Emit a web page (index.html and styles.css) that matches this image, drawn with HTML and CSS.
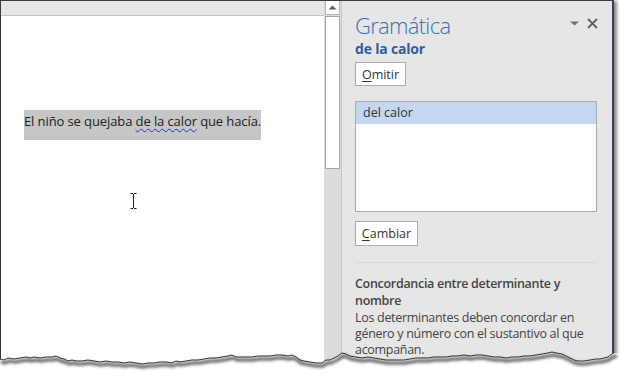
FILE: index.html
```html
<!DOCTYPE html>
<html lang="es">
<head>
<meta charset="utf-8">
<title>Gramática</title>
<link rel="stylesheet" href="styles.css">
</head>
<body>
<div class="window">
  <div class="doc">
    <div class="topbar"></div>
    <div class="doc-body">
      <p class="sentence"><span class="sel">El niño se quejaba <span class="err">de la calor</span> que hacía.</span></p>
      <svg class="ibeam" width="7" height="16" viewBox="0 0 7 16"><path d="M0.5 0.5h2.5M4 0.5h2.5M3.5 1v14M0.5 15.5h2.5M4 15.5h2.5" stroke="#222" stroke-width="1" fill="none"/></svg>
    </div>
  </div>
  <div class="scroll">
    <div class="scroll-btn"><svg width="9" height="5" viewBox="0 0 9 5"><path d="M0.5 4.5L4.5 0.5L8.5 4.5Z" fill="#606060"/></svg></div>
    <div class="scroll-thumb"></div>
  </div>
  <div class="pane">
    <div class="pane-head">
      <h1 class="title">Gramática</h1>
      <svg class="pane-icons" width="28" height="11" viewBox="0 0 28 11">
        <path d="M0 3.5h9L4.5 7.5Z" fill="#707070"/>
        <path d="M18 1L27 10M27 1L18 10" stroke="#666" stroke-width="2" fill="none"/>
      </svg>
    </div>
    <div class="subtitle">de la calor</div>
    <button class="btn btn-omitir"><u>O</u>mitir</button>
    <div class="listbox">
      <div class="list-item selected">del calor</div>
    </div>
    <button class="btn btn-cambiar"><u>C</u>ambiar</button>
    <div class="sep"></div>
    <div class="rule-title">Concordancia entre determinante y<br>nombre</div>
    <div class="rule-desc">Los determinantes deben concordar en<br>género y número con el sustantivo al que<br>acompañan.</div>
  </div>
</div>
<svg class="torn" width="624" height="40" viewBox="0 335 624 40">
  <defs>
    <filter id="blur" x="-5%" y="-50%" width="110%" height="200%"><feGaussianBlur stdDeviation="1.4"/></filter>
  </defs>
  <path fill="#fff" d="M0,359 L4,360 8,358 14,359 20,358 26,357 30,358 34,357 40,358 46,357 52,357 56,356 60,358 64,359 68,361 72,360 76,361 82,361 88,360 94,361 100,362 106,361 112,362 118,362 124,363 130,362 136,363 142,364 148,363 154,363 160,362 166,362 172,363 176,361 180,362 186,361 192,360 198,360 204,359 210,358 216,358 222,357 228,356 232,355 236,357 240,357 246,357 252,357 258,356 264,356 270,356 276,355 282,355 288,356 292,355 296,357 300,360 304,361 310,362 316,363 322,363 326,360 330,360 334,358 338,356 342,353 346,354 350,356 356,357 362,358 368,357 374,358 380,359 386,360 392,360 398,360 404,360 410,359 416,358 422,358 428,358 434,357 440,357 446,357 452,356 458,356 464,355 470,356 476,355 482,355 488,356 494,357 500,357 506,358 512,357 518,357 524,356 530,356 536,355 542,354 548,353 552,352 556,353 562,354 566,356 570,358 574,360 578,361 584,361 590,360 596,359 600,359 604,358 608,357 612,354 616,353 624,355 L624,375 L0,375 Z"/>
  <path filter="url(#blur)" transform="translate(1,3)" fill="none" stroke="#555" stroke-width="3" d="M0,359 L4,360 8,358 14,359 20,358 26,357 30,358 34,357 40,358 46,357 52,357 56,356 60,358 64,359 68,361 72,360 76,361 82,361 88,360 94,361 100,362 106,361 112,362 118,362 124,363 130,362 136,363 142,364 148,363 154,363 160,362 166,362 172,363 176,361 180,362 186,361 192,360 198,360 204,359 210,358 216,358 222,357 228,356 232,355 236,357 240,357 246,357 252,357 258,356 264,356 270,356 276,355 282,355 288,356 292,355 296,357 300,360 304,361 310,362 316,363 322,363 326,360 330,360 334,358 338,356 342,353 346,354 350,356 356,357 362,358 368,357 374,358 380,359 386,360 392,360 398,360 404,360 410,359 416,358 422,358 428,358 434,357 440,357 446,357 452,356 458,356 464,355 470,356 476,355 482,355 488,356 494,357 500,357 506,358 512,357 518,357 524,356 530,356 536,355 542,354 548,353 552,352 556,353 562,354 566,356 570,358 574,360 578,361 584,361 590,360 596,359 600,359 604,358 608,357 612,354 616,353"/>
  <path fill="none" stroke="#333" stroke-width="1" d="M0,359 L4,360 8,358 14,359 20,358 26,357 30,358 34,357 40,358 46,357 52,357 56,356 60,358 64,359 68,361 72,360 76,361 82,361 88,360 94,361 100,362 106,361 112,362 118,362 124,363 130,362 136,363 142,364 148,363 154,363 160,362 166,362 172,363 176,361 180,362 186,361 192,360 198,360 204,359 210,358 216,358 222,357 228,356 232,355 236,357 240,357 246,357 252,357 258,356 264,356 270,356 276,355 282,355 288,356 292,355 296,357 300,360 304,361 310,362 316,363 322,363 326,360 330,360 334,358 338,356 342,353 346,354 350,356 356,357 362,358 368,357 374,358 380,359 386,360 392,360 398,360 404,360 410,359 416,358 422,358 428,358 434,357 440,357 446,357 452,356 458,356 464,355 470,356 476,355 482,355 488,356 494,357 500,357 506,358 512,357 518,357 524,356 530,356 536,355 542,354 548,353 552,352 556,353 562,354 566,356 570,358 574,360 578,361 584,361 590,360 596,359 600,359 604,358 608,357 612,354"/>
</svg>
</body>
</html>
```

FILE: styles.css
```css
html, body {
  margin: 0;
  padding: 0;
}
body {
  width: 624px;
  height: 375px;
  overflow: hidden;
  background: #fff;
  position: relative;
  font-family: "Open Sans", "Noto Sans", sans-serif;
}
.window {
  box-sizing: border-box;
  width: 614px;
  height: 375px;
  display: flex;
  border-top: 1px solid #3a3a3a;
  border-left: 1px solid #3a3a3a;
  border-right: 2px solid #34405a;
  box-shadow: 3px 1px 3px rgba(0, 0, 0, 0.45);
}
.doc {
  width: 323px;
  display: flex;
  flex-direction: column;
  background: #fff;
}
.topbar {
  height: 14px;
  background: #e6e6e6;
  border-bottom: 1px solid #c4c4c4;
}
.doc-body {
  position: relative;
  flex: 1;
  padding: 94px 0 0 23px;
}
.sentence {
  margin: 0;
  font-size: 13px;
  line-height: 22px;
  color: #222;
}
.sel {
  display: inline-block;
  background: #c6c6c6;
  padding: 0 0 8px 0;
  letter-spacing: -0.1px;
}
.err {
  text-decoration: underline wavy #2a2ad8;
  text-decoration-thickness: 1px;
  text-underline-offset: 2px;
}
.ibeam {
  position: absolute;
  left: 129px;
  top: 177px;
}
.scroll {
  box-sizing: border-box;
  width: 18px;
  background: #dcdcdc;
  border-right: 1px solid #c8c8c8;
  display: flex;
  flex-direction: column;
  padding-left: 1px;
}
.scroll-btn {
  box-sizing: border-box;
  width: 15px;
  height: 14px;
  background: #fff;
  border: 1px solid #b4b4b4;
  border-top: none;
  display: flex;
  align-items: center;
  justify-content: center;
}
.scroll-thumb {
  box-sizing: border-box;
  width: 15px;
  height: 153px;
  margin-top: 1px;
  background: #fff;
  border: 1px solid #a8a8a8;
}
.pane {
  flex: 1;
  background: #e6e6e6;
  padding: 11px 15px 0 13px;
  color: #444;
}
.pane-head {
  display: flex;
  justify-content: space-between;
  align-items: flex-start;
}
.title {
  margin: 0;
  font-size: 22px;
  font-weight: 300;
  line-height: 26px;
  letter-spacing: -0.7px;
  color: #3b70b6;
}
.pane-icons {
  margin-top: 6px;
  margin-right: -1px;
}
.subtitle {
  font-size: 14px;
  font-weight: 700;
  line-height: 21px;
  color: #2f5d9f;
  letter-spacing: -0.2px;
}
.btn {
  box-sizing: border-box;
  display: block;
  height: 24px;
  padding: 0;
  background: #fff;
  border: 1px solid #acacac;
  font-family: inherit;
  font-size: 12.5px;
  color: #333;
  text-align: center;
}
.btn u {
  text-underline-offset: 2px;
}
.btn-omitir {
  width: 51px;
  margin-top: 3px;
}
.btn-cambiar {
  width: 63px;
  height: 25px;
  margin-top: 9px;
}
.listbox {
  box-sizing: border-box;
  height: 111px;
  margin-top: 15px;
  background: #fff;
  border: 1px solid #acacac;
}
.list-item {
  height: 22px;
  line-height: 22px;
  padding-left: 7px;
  font-size: 12.5px;
  color: #333;
}
.selected {
  background: #c4d7f1;
}
.sep {
  height: 1px;
  margin-top: 16px;
  background: #d8d8d8;
}
.rule-title {
  margin-top: 12px;
  font-size: 12.5px;
  font-weight: 600;
  line-height: 17px;
  color: #444;
  letter-spacing: -0.3px;
}
.rule-desc {
  margin-top: 1px;
  font-size: 12.5px;
  line-height: 16px;
  color: #444;
  letter-spacing: -0.3px;
}
.torn {
  position: absolute;
  left: 0;
  top: 335px;
}
```
